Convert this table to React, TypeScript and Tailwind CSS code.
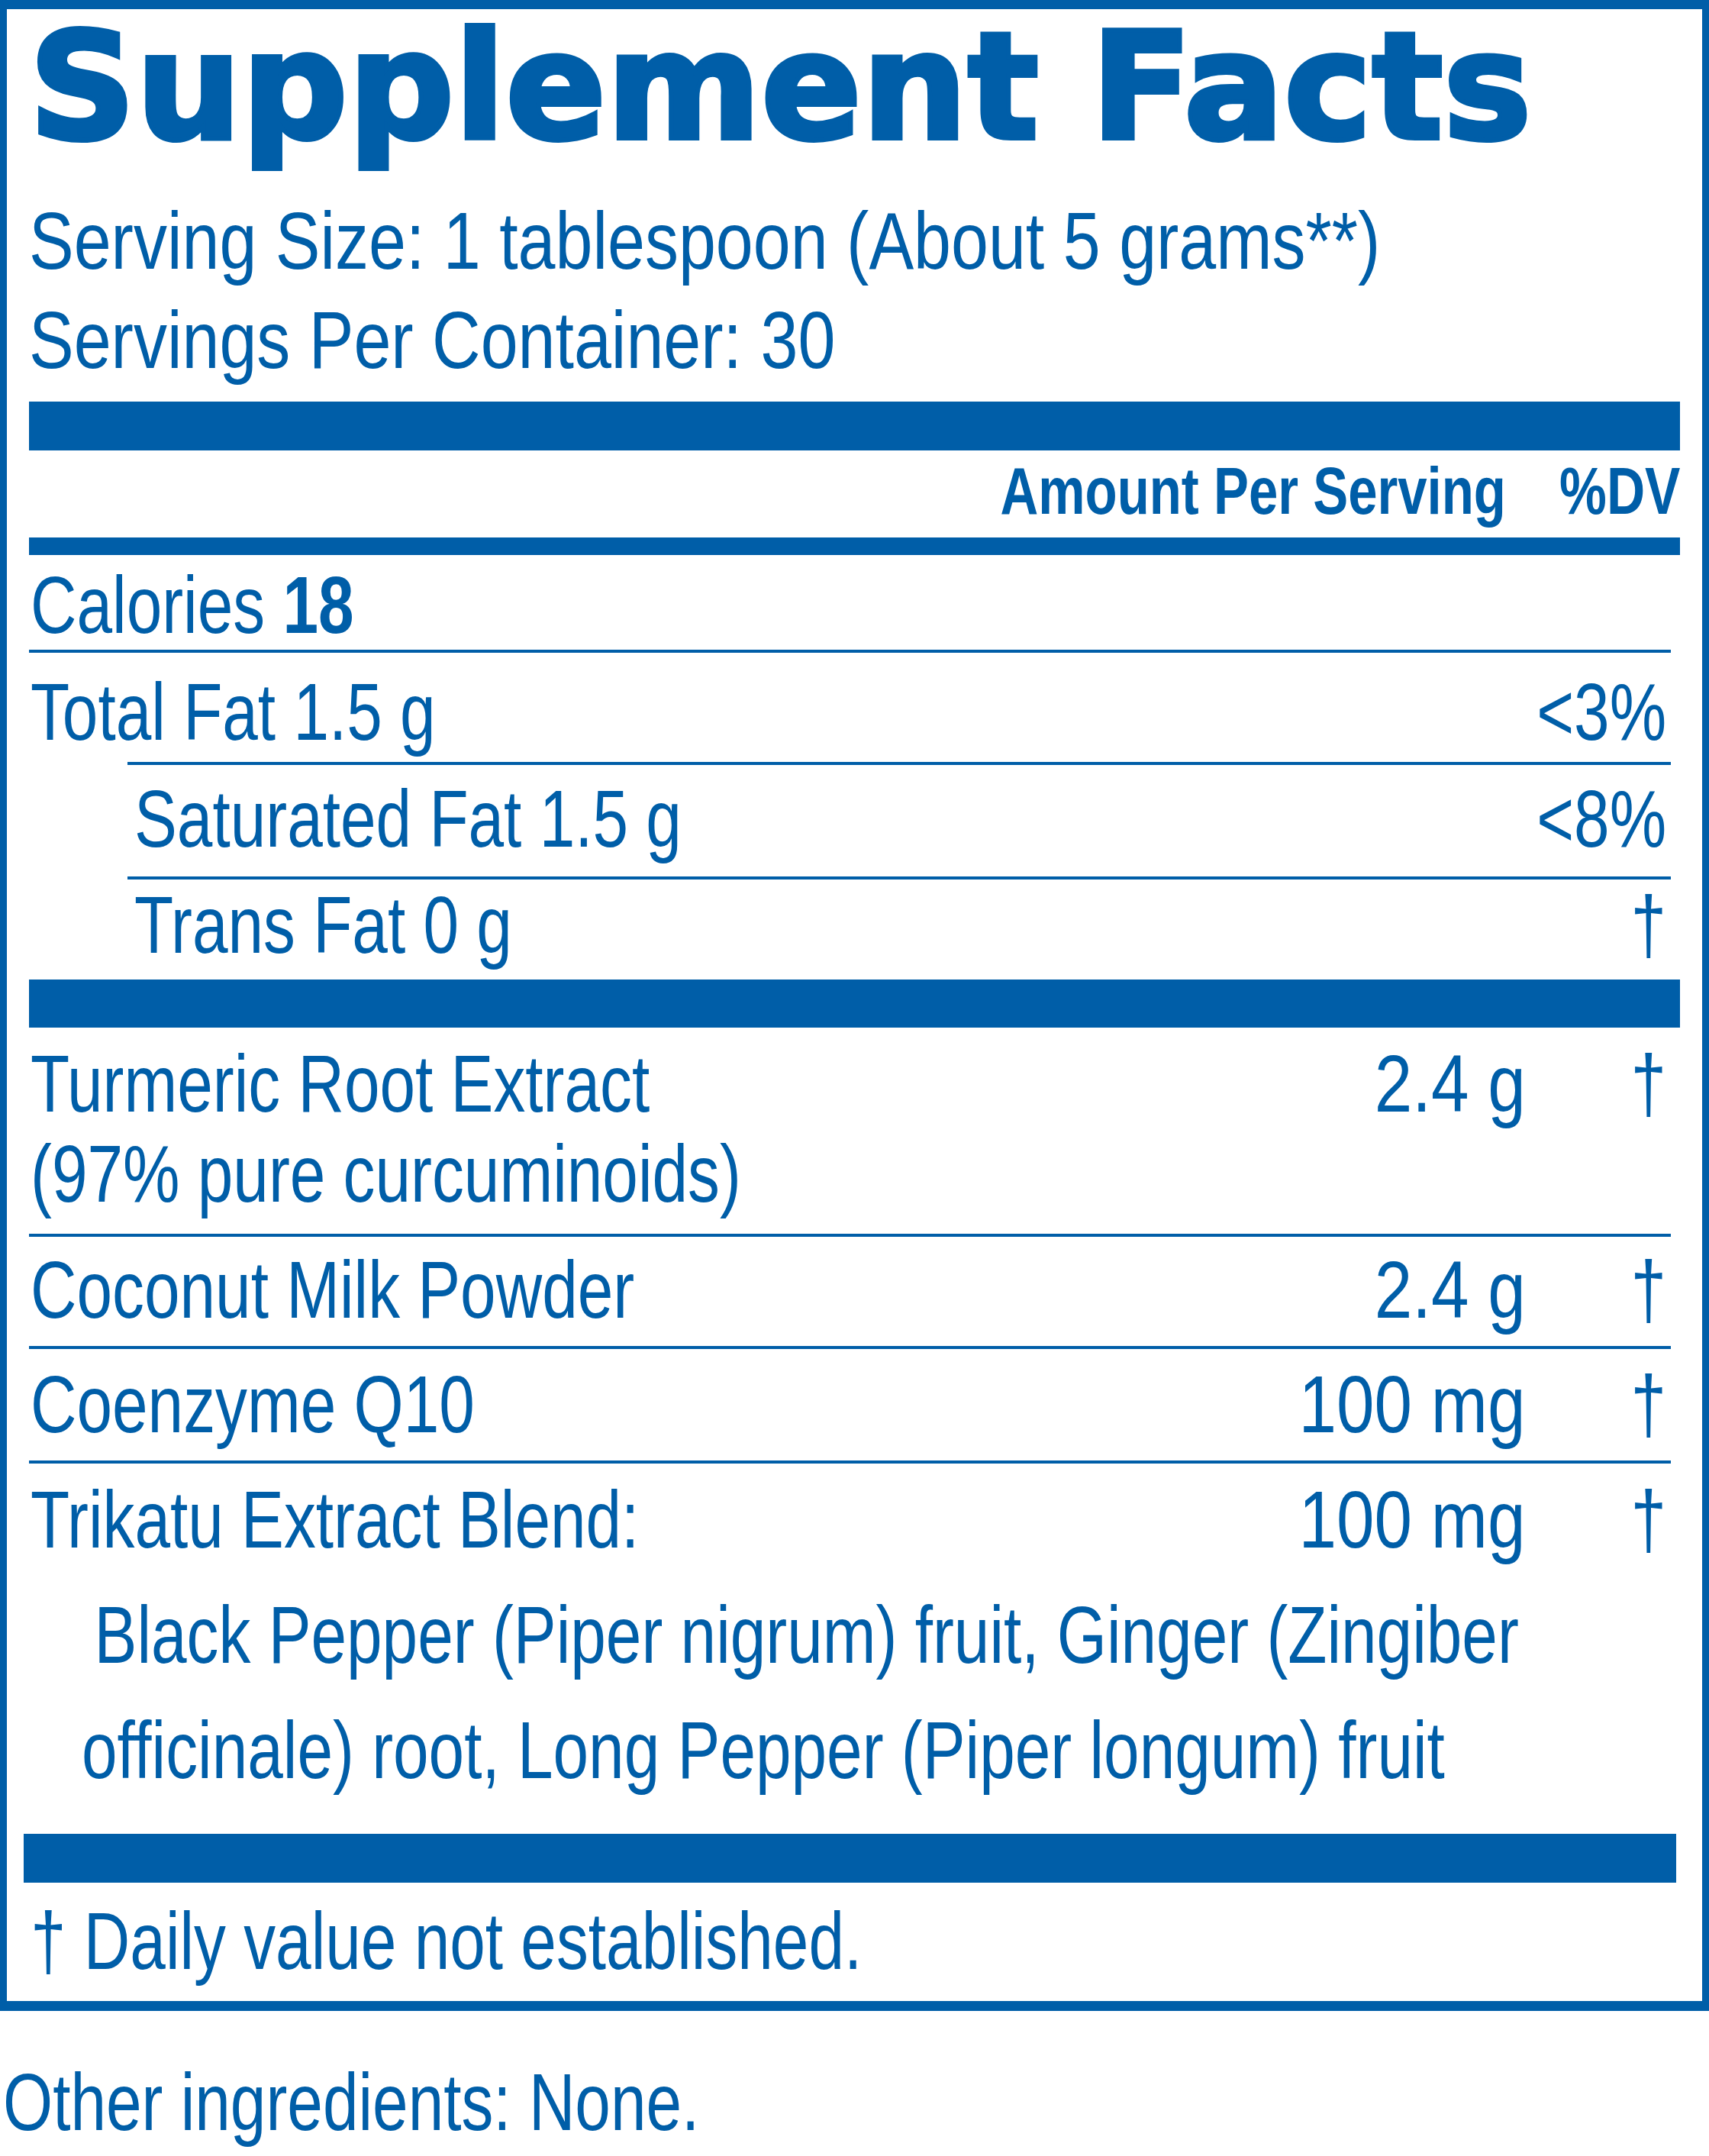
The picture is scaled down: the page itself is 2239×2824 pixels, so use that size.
import React from "react";

// condensed look: Liberation Sans squeezed horizontally
const C = ({ children, right }: { children: React.ReactNode; right?: boolean }) => (
  <span
    className={`inline-block whitespace-nowrap scale-x-[0.79] ${right ? "origin-right" : "origin-left"}`}
  >
    {children}
  </span>
);

const Amt = ({ children }: { children: React.ReactNode }) => (
  <span className="inline-block whitespace-nowrap origin-right scale-x-[0.84]">{children}</span>
);

type RowProps = {
  label: React.ReactNode;
  amount?: string;
  dv?: string;
  h: string;
  pt: string;
  indent?: boolean;
};

const Cols = ({ amount, dv }: { amount?: string; dv?: string }) => (
  <>
    {amount !== undefined && (
      <div className="flex w-[400px] justify-end">
        <Amt>{amount}</Amt>
      </div>
    )}
    <div className="flex w-[202px] justify-end pr-[18px]">{dv && <C right>{dv}</C>}</div>
  </>
);

const Row = ({ label, amount, dv, h, pt, indent }: RowProps) => (
  <div className={`flex ${h} ${pt} text-[106px] leading-[106px]`}>
    <div className={`flex-1 ${indent ? "pl-[138px]" : "pl-[2px]"}`}>
      <C>{label}</C>
    </div>
    <Cols amount={amount} dv={dv} />
  </div>
);

const Rule = ({ indent }: { indent?: boolean }) => (
  <div className={`h-[4px] bg-[#005ea8] mr-[12px] ${indent ? "ml-[129px]" : ""}`} />
);

export default function App() {
  return (
    <div className="w-[2239px] h-[2824px] overflow-hidden bg-white text-[#005ea8] font-['Liberation_Sans',Arial,sans-serif]">
      <div className="border-[#005ea8] border-l-[9px] border-r-[9px] border-t-[12px] border-b-[13px] px-[29px]">
        <h1 className="pt-[5px] text-[194px] leading-[194px] font-bold tracking-[0.5px] font-['DejaVu_Sans',sans-serif] [-webkit-text-stroke:6px_#005ea8]">
          Supplement Facts
        </h1>
        <div className="pt-[39px] text-[106px] leading-[130px]">
          <div>
            <span className="inline-block whitespace-nowrap origin-left scale-x-[0.83]">
              Serving Size: 1 tablespoon (About 5 grams**)
            </span>
          </div>
          <div>
            <span className="inline-block whitespace-nowrap origin-left scale-x-[0.83]">
              Servings Per Container: 30
            </span>
          </div>
        </div>
        <div className="mt-[16px] h-[64px] bg-[#005ea8]" />
        <div className="flex h-[114px] justify-end pb-[9px] text-[88px] leading-[105px] font-bold">
          <span className="mr-[28px] inline-block whitespace-nowrap origin-right scale-x-[0.783]">
            Amount Per Serving
          </span>
          <span className="inline-block whitespace-nowrap origin-right scale-x-[0.79]">%DV</span>
        </div>
        <div className="h-[23px] bg-[#005ea8]" />

        <Row
          h="h-[124px]"
          pt="pt-[12px]"
          label={
            <>
              Calories <span className="font-bold">18</span>
            </>
          }
        />
        <Rule />
        <Row h="h-[143px]" pt="pt-[24px]" label="Total Fat 1.5 g" dv="<3%" />
        <Rule indent />
        <Row h="h-[146px]" pt="pt-[17px]" label="Saturated Fat 1.5 g" dv="<8%" indent />
        <Rule indent />
        <Row h="h-[131px]" pt="pt-[6px]" label="Trans Fat 0 g" dv="†" indent />
        <div className="h-[63px] bg-[#005ea8]" />

        <div className="flex h-[270px] pt-[14px] text-[106px] leading-[118px]">
          <div className="flex-1 pl-[2px]">
            <C>
              Turmeric Root Extract
              <br />
              (97% pure curcuminoids)
            </C>
          </div>
          <Cols amount="2.4 g" dv="†" />
        </div>
        <Rule />
        <Row h="h-[143px]" pt="pt-[16px]" label="Coconut Milk Powder" amount="2.4 g" dv="†" />
        <Rule />
        <Row h="h-[146px]" pt="pt-[19px]" label="Coenzyme Q10" amount="100 mg" dv="†" />
        <Rule />
        <div className="h-[485px] pt-[20px]">
          <div className="flex text-[106px] leading-[106px]">
            <div className="flex-1 pl-[2px]">
              <C>Trikatu Extract Blend:</C>
            </div>
            <Cols amount="100 mg" dv="†" />
          </div>
          <div className="mt-[23px] overflow-hidden pl-[69px] text-[106px] leading-[151px]">
            <C>
              <span className="pl-[21px]">Black Pepper (Piper nigrum) fruit, Ginger (Zingiber</span>
              <br />
              officinale) root, Long Pepper (Piper longum) fruit
            </C>
          </div>
        </div>
        <div className="-ml-[7px] mr-[5px] h-[64px] bg-[#005ea8]" />
        <div className="h-[155px] pt-[23px] pl-[2px] text-[106px] leading-[106px]">
          <C>† Daily value not established.</C>
        </div>
      </div>
      <div className="pt-[66px] pl-[4px] text-[106px] leading-[106px]">
        <C>Other ingredients: None.</C>
      </div>
    </div>
  );
}
